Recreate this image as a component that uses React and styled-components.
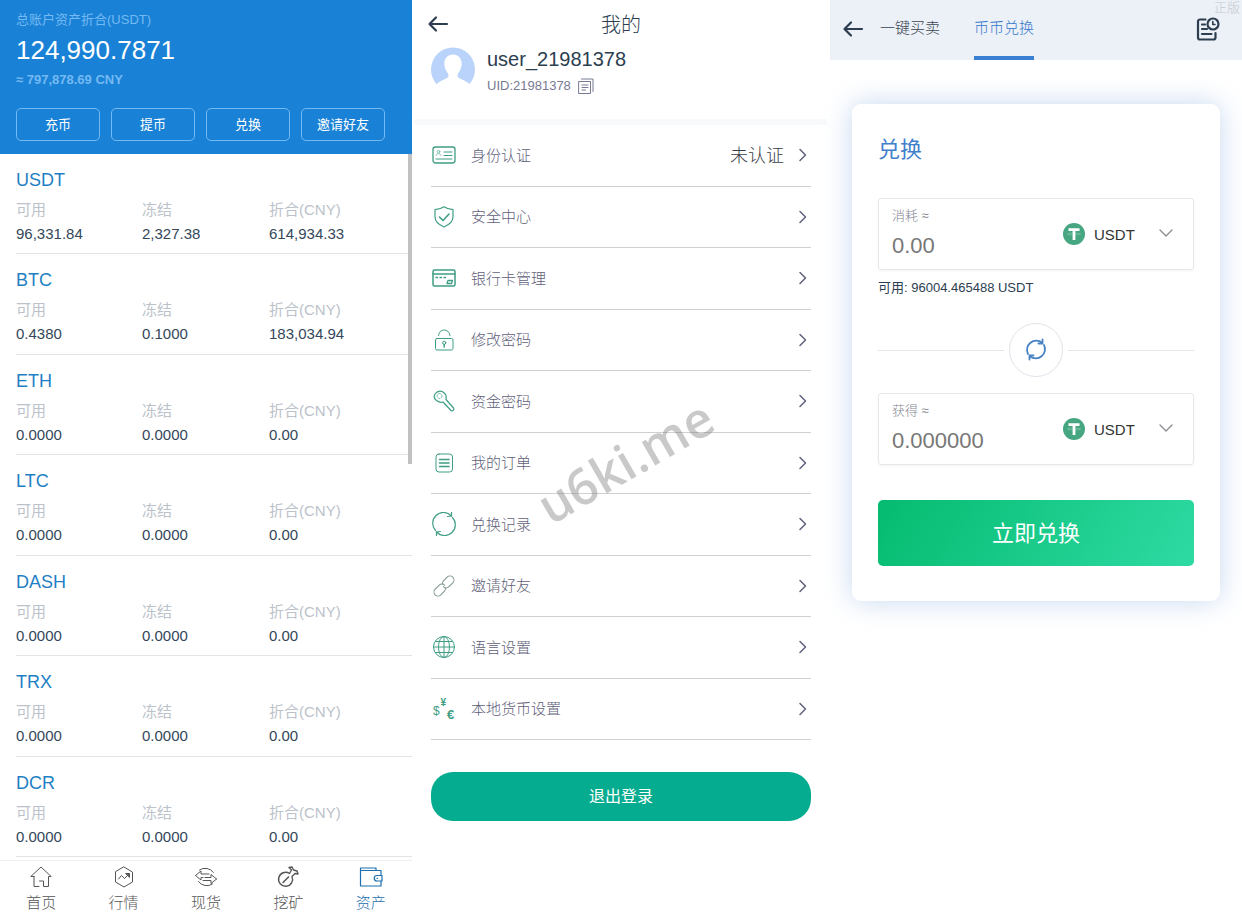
import React, { useState } from 'react';
import styled, { createGlobalStyle } from 'styled-components';

const GlobalStyle = createGlobalStyle`
  * {
    box-sizing: border-box;
  }

  body {
    margin: 0;
    background: #fff;
    color: #2c3e50;
    font-family: "Liberation Sans", Arial, "Noto Sans CJK SC", sans-serif;
    font-size: 15px;
    font-weight: 300;
  }

  button, input, select {
    font-family: inherit;
    font-weight: inherit;
    margin: 0;
    padding: 0;
    border: 0;
    background: none;
  }

  button {
    cursor: pointer;
  }

  a {
    color: inherit;
    text-decoration: none;
  }

  svg {
    display: block;
    flex-shrink: 0;
  }
`;

const Page = styled.main`
  display: grid;
  grid-template-columns: 412fr 418fr 412fr;
  min-height: 100vh;
`;

const Icon = styled.svg.attrs({ 'aria-hidden': true })`
  width: ${(p) => p.$size || 24}px;
  height: ${(p) => p.$size || 24}px;
  fill: none;
  stroke: currentColor;
  stroke-width: ${(p) => p.$stroke || 1};
  stroke-linecap: round;
  stroke-linejoin: round;
`;

const IconButton = styled.button`
  display: flex;
  color: ${(p) => p.$color || '#2c3e50'};
`;

/* ---------- assets ---------- */

const Wallet = styled.section`
  display: flex;
  flex-direction: column;
  min-width: 0;
`;

const WalletHeader = styled.header`
  padding: 10px 27px 13px 16px;
  background: #1a82d6;
`;

const WalletNote = styled.p`
  margin: 0;
  color: #74b9f2;
  font-size: 13px;
  font-weight: ${(p) => (p.$bold ? 700 : 400)};
  line-height: 20px;
`;

const WalletTotal = styled.p`
  margin: 0;
  color: #fff;
  font-size: 26px;
  line-height: 40px;
`;

const WalletActions = styled.div`
  display: grid;
  grid-template-columns: repeat(4, 1fr);
  gap: 11px;
  margin-top: 18px;
`;

const WalletAction = styled.button`
  height: 33px;
  padding-bottom: 2px;
  border: 1px solid #74b9f2;
  border-radius: 5px;
  color: #fff;
  font-size: 13px;
  font-weight: 400;
`;

const CoinList = styled.div`
  position: relative;
  flex: 1;
  display: grid;
  grid-auto-rows: 1fr;
  padding: 0 0 3px 16px;
`;

const ScrollThumb = styled.div`
  position: absolute;
  top: 0;
  right: 0;
  width: 4px;
  height: 310px;
  background: #c1c1c1;
`;

const Coin = styled.article`
  padding: 14px 0 7px;
  border-bottom: 1px solid #e2e4e8;
`;

const CoinName = styled.h2`
  margin: 0 0 6px;
  color: #1f7fc4;
  font-size: 18px;
  font-weight: 400;
  line-height: 24px;
`;

const CoinStats = styled.dl`
  display: grid;
  grid-template-columns: 126fr 127fr 143fr;
  margin: 0;
`;

const CoinLabel = styled.dt`
  color: #bcc2ca;
  font-weight: 400;
  line-height: 24px;
`;

const CoinValue = styled.dd`
  margin: 0;
  color: #34475a;
  line-height: 24px;
`;

const TabBar = styled.nav`
  display: grid;
  grid-template-columns: repeat(5, 1fr);
  height: 55px;
  border-top: 1px solid #f0f0f2;
`;

const TabItem = styled.a`
  display: flex;
  flex-direction: column;
  align-items: center;
  padding-top: 4px;
  color: ${(p) => (p.$active ? '#1b6fae' : '#555')};
  line-height: 28px;
`;

/* ---------- profile ---------- */

const Profile = styled.section`
  position: relative;
  min-width: 0;
`;

const ProfileHeader = styled.header`
  display: grid;
  grid-template-columns: 22px 1fr 22px;
  align-items: center;
  height: 47px;
  padding: 0 15px;
`;

const ProfileTitle = styled.h1`
  margin: 0;
  font-size: 20px;
  font-weight: 300;
  text-align: center;
`;

const UserCard = styled.div`
  display: flex;
  gap: 12px;
  height: 72px;
  padding: 0 19px;
`;

const UserName = styled.p`
  margin: 0;
  font-size: 20px;
  line-height: 24px;
`;

const UserId = styled.p`
  display: flex;
  align-items: center;
  gap: 7px;
  margin: 3px 0 0;
  color: #777a92;
  font-size: 13px;
  line-height: 24px;
`;

const Divider = styled.div`
  height: 6px;
  margin: 0 3px 0 2px;
  background: #f8f9fb;
`;

const Menu = styled.nav`
  display: grid;
  grid-auto-rows: 1fr;
  min-height: 615px;
  margin: 0 19px;
`;

const MenuItem = styled.a`
  display: flex;
  align-items: center;
  gap: 15px;
  padding-right: 1px;
  border-bottom: 1px solid #cfd0d4;
  color: #5f617a;
`;

const MenuIcon = styled.span`
  display: flex;
  justify-content: center;
  width: 25px;
  color: #3f9d84;
`;

const MenuLabel = styled.span`
  flex: 1;
  padding-bottom: 2px;
`;

const MenuStatus = styled.span`
  margin-right: -3px;
  padding-bottom: 2px;
  color: #3a3b44;
  font-size: 18px;
`;

const LogoutButton = styled.button`
  display: block;
  width: calc(100% - 38px);
  height: 49px;
  margin: 32px 19px 0;
  padding-bottom: 3px;
  border-radius: 22px;
  background: #06ac90;
  color: #fff;
  font-size: 16px;
  font-weight: 400;
`;

const Watermark = styled.span`
  position: absolute;
  top: 426px;
  left: 51%;
  color: rgba(120, 120, 120, 0.4);
  font-family: "Open Sans", sans-serif;
  font-size: 50px;
  font-weight: 600;
  line-height: 70px;
  transform: translateX(-50%) rotate(-30deg);
  pointer-events: none;
`;

/* ---------- exchange ---------- */

const Exchange = styled.section`
  position: relative;
  min-width: 0;
`;

const ExchangeHeader = styled.header`
  display: flex;
  align-items: center;
  height: 60px;
  padding: 0 22px 2px 12px;
  background: #ecf0f7;
`;

const ExchangeTabs = styled.nav`
  display: flex;
  flex: 1;
  gap: 34px;
  margin-left: 16px;
`;

const ExchangeTab = styled.a`
  height: 60px;
  margin-bottom: -2px;
  border-bottom: 4px solid ${(p) => (p.$active ? '#3a80d2' : 'transparent')};
  color: ${(p) => (p.$active ? '#3478cc' : '#3a4653')};
  line-height: 56px;
`;

const Badge = styled.span`
  position: absolute;
  top: -3px;
  right: 2px;
  color: #c4c8ce;
  font-size: 13px;
`;

const Card = styled.form`
  margin: 44px 22px 0;
  padding: 26px 26px 35px;
  border-radius: 9px;
  background: #fff;
  box-shadow: 0 0 28px rgba(80, 135, 210, 0.32);
`;

const CardTitle = styled.h2`
  margin: 0 0 28px;
  color: #3f7fcb;
  font-size: 22px;
  font-weight: 400;
  line-height: 40px;
`;

const Field = styled.div`
  display: flex;
  align-items: center;
  height: 72px;
  padding: 0 20px 0 13px;
  border: 1px solid #e5e7ea;
  border-radius: 3px;
  box-shadow: 0 1px 3px rgba(0, 0, 0, 0.05);
`;

const Amount = styled.div`
  flex: 1;
  min-width: 0;
  padding-bottom: 2px;
`;

const AmountLabel = styled.label`
  display: block;
  color: #858694;
  font-size: 13px;
  line-height: 26px;
`;

const AmountInput = styled.input`
  display: block;
  width: 100%;
  height: 34px;
  font-size: 22px;
  outline: none;

  &::placeholder {
    color: #777;
    opacity: 1;
  }
`;

const Picker = styled.div`
  display: flex;
  align-items: center;
  gap: 9px;
  width: 110px;
  color: #8b8d92;
`;

const CoinSelect = styled.select`
  flex: 1;
  min-width: 0;
  appearance: none;
  color: #333;
  font-size: 15px;
  outline: none;
`;

const Available = styled.p`
  margin: 6px 0 23px;
  color: #2c3e50;
  font-size: 13px;
  font-weight: 400;
  line-height: 24px;
`;

const SwapRow = styled.div`
  display: flex;
  align-items: center;
  gap: 5px;
  margin-bottom: 16px;

  &::before,
  &::after {
    content: '';
    flex: 1;
    height: 1px;
    background: #e4e6ea;
  }
`;

const SwapButton = styled.button`
  display: flex;
  align-items: center;
  justify-content: center;
  width: 54px;
  height: 54px;
  border: 1px solid #e1e3ea;
  border-radius: 50%;
  color: #4581c4;
`;

const SubmitButton = styled.button`
  width: 100%;
  height: 66px;
  margin-top: 35px;
  padding-bottom: 4px;
  border-radius: 5px;
  background: linear-gradient(120deg, #05bb70, #2edaa3);
  color: #fff;
  font-size: 22px;
  font-weight: 400;
`;

const coins = [
  { name: 'USDT', free: '96,331.84', frozen: '2,327.38', cny: '614,934.33' },
  { name: 'BTC', free: '0.4380', frozen: '0.1000', cny: '183,034.94' },
  { name: 'ETH', free: '0.0000', frozen: '0.0000', cny: '0.00' },
  { name: 'LTC', free: '0.0000', frozen: '0.0000', cny: '0.00' },
  { name: 'DASH', free: '0.0000', frozen: '0.0000', cny: '0.00' },
  { name: 'TRX', free: '0.0000', frozen: '0.0000', cny: '0.00' },
  { name: 'DCR', free: '0.0000', frozen: '0.0000', cny: '0.00' },
];

const tabs = [
  {
    label: '首页',
    icon: <path d="M5 11.5H1.8L12 2l10.2 9.5H19.5V21.500h-5v-5.500h-4M5 11.500V21.500h5" />,
  },
  {
    label: '行情',
    icon: (
      <>
        <path d="M12 2l8.500 5v10L12 22l-8.500-5V7z" />
        <path d="M6.500 14l3-3.500 3 3L17 9" />
        <path d="M14 8.500h3.500v3.500z" fill="currentColor" />
      </>
    ),
  },
  {
    label: '现货',
    icon: (
      <>
        <path d="M5.500 5a10 10 0 0 1 14 2.500M18.500 19a10 10 0 0 1-14-2.500" />
        <path d="M1.500 10.500L7 6v3h8M1.500 10.500L7 15v-2.500h2M22.500 14L17 9.500v3H11M22.500 14L17 18.500v-3H9" />
      </>
    ),
  },
  {
    label: '挖矿',
    icon: (
      <>
        <path d="M13.500 8.500A7 7 0 1 0 16 11.500L19 8.500l3 .5-1-3-3.500-1-1.500-3-3 .5 2.500 2.500z" strokeWidth="1.400" />
        <path d="M7 17.500l5.500-5.500" strokeWidth="1.600" />
      </>
    ),
  },
  {
    label: '资产',
    active: true,
    icon: (
      <path
        d="M1.500 5.500V3h15.500v2.500M1.500 5.500h20.500v5M1.500 5.500V21H22v-5M23 10.500h-5a2.750 2.750 0 0 0 0 5.500h5zM18 13.300h.5"
        strokeWidth="1.200"
      />
    ),
  },
];

const menu = [
  {
    label: '身份认证',
    status: '未认证',
    icon: (
      <>
        <rect x="1" y="4" width="22" height="16" rx="2.500" strokeWidth="1.300" />
        <circle cx="6.500" cy="8.700" r="1.400" strokeWidth=".6" />
        <path d="M4 12.500c.3-2.500 4.700-2.500 5 0" strokeWidth=".6" />
        <path d="M12 9h8M12 12.500h8M4 16h16" />
      </>
    ),
  },
  {
    label: '安全中心',
    icon: (
      <>
        <path d="M12 1.800c3 2 6 2.800 9 2.800v7c0 5-4 8.400-9 10.400-5-2-9-5.400-9-10.400v-7c3 0 6-.8 9-2.800z" strokeWidth="1.200" />
        <path d="M7.500 12l3.500 3.500 6-6.500" strokeWidth="1.600" />
      </>
    ),
  },
  {
    label: '银行卡管理',
    icon: (
      <>
        <rect x="1" y="4" width="22" height="16" rx="1.500" strokeWidth="1.500" />
        <path d="M1 8h22" strokeWidth="1.500" />
        <path d="M4 11.500h1.500M8 11.500h1.500M12 11.500h1.500M16 14.500h4.500l-1 3H15z" strokeWidth="1.300" />
      </>
    ),
  },
  {
    label: '修改密码',
    icon: (
      <>
        <rect x="3.500" y="10.500" width="17.500" height="11.500" rx="1.500" />
        <path d="M6.500 7.500C7 0 17.500 0 18 7.500" />
        <circle cx="12.200" cy="14.800" r="1.600" />
        <path d="M12.200 16.500v2.500" strokeWidth="1.500" />
      </>
    ),
  },
  {
    label: '资金密码',
    icon: (
      <>
        <path d="M11 13l8 8.500c1.500 1.200 3.700-.8 2.500-2.500L14 10.500c.8-3.500-.5-6-3-7.500-3-1.500-6-.5-8 2-1.500 2.500-.5 5 1.500 6.500 2 1.500 4.500 2.300 6.500 1.500z" strokeWidth="1.200" />
        <circle cx="7.500" cy="7" r="2.500" strokeDasharray="2 1.500" strokeWidth=".7" />
      </>
    ),
  },
  {
    label: '我的订单',
    icon: (
      <>
        <rect x="4" y="3" width="16.500" height="18" rx="3" />
        <path d="M7.500 8.500h9.500M7.500 12h9.500M7.500 15.500h9.500" strokeWidth="1.600" />
      </>
    ),
  },
  {
    label: '兑换记录',
    icon: (
      <>
        <path d="M3.500 18.500A10.700 10.700 0 0 1 19.500 4M20.500 5.500A10.700 10.700 0 0 1 4.500 20" strokeWidth="1.200" />
        <path d="M15.500 4.500l4-.5v-3.500M8.500 19.500l-4 .5v3.500" strokeWidth="1.200" />
      </>
    ),
  },
  {
    label: '邀请好友',
    icon: (
      <g transform="rotate(-45 12 12)" stroke="#7f958e">
        <path d="M11.500 14.500a4 4 0 0 1-2.500 1.500H3.500a4 4 0 0 1 0-8H9a4 4 0 0 1 4 4" />
        <path d="M12.500 9.500a4 4 0 0 1 2.500-1.500h5.500a4 4 0 0 1 0 8H15a4 4 0 0 1-4-4" />
      </g>
    ),
  },
  {
    label: '语言设置',
    icon: (
      <>
        <circle cx="12" cy="12" r="10.500" />
        <ellipse cx="12" cy="12" rx="5.500" ry="10.500" />
        <path d="M12 1.500v21M1.500 12h21M3.500 6.500h17M3.500 17.500h17" />
      </>
    ),
  },
  {
    label: '本地货币设置',
    icon: (
      <g fill="currentColor" stroke="none" fontFamily="Liberation Sans, sans-serif">
        <text x="1" y="18" fontSize="12">$</text>
        <text x="8.500" y="9" fontSize="10" fontWeight="700">¥</text>
        <text x="15" y="22" fontSize="13" fontWeight="700">€</text>
      </g>
    ),
  },
];

const BackArrow = () => (
  <Icon $size={22} $stroke={2.2} viewBox="0 0 22 22">
    <path d="M20 11H3M9 4.500L2.500 11 9 17.500" />
  </Icon>
);

const Chevron = () => (
  <Icon $size={14} $stroke={1.5} viewBox="0 0 14 14">
    <path d="M4 1.500l5.500 5.500L4 12.500" />
  </Icon>
);

const TetherLogo = () => (
  <Icon $size={22} viewBox="0 0 22 22">
    <circle cx="11" cy="11" r="11" fill="#45a681" stroke="none" />
    <ellipse cx="11" cy="11" rx="6.500" ry="1" stroke="#8dcab1" strokeWidth=".6" />
    <path d="M5.500 6.700h11M11 6.700v10.300" stroke="#fff" strokeWidth="2.800" strokeLinecap="butt" />
  </Icon>
);

const AmountField = ({ id, label, placeholder }) => {
  const [value, setValue] = useState('');

  return (
    <Field>
      <Amount>
        <AmountLabel htmlFor={id}>{label}</AmountLabel>
        <AmountInput
          id={id}
          type="text"
          inputMode="decimal"
          placeholder={placeholder}
          value={value}
          onChange={(e) => setValue(e.target.value)}
        />
      </Amount>
      <Picker>
        <TetherLogo />
        <CoinSelect aria-label={`${label} 币种`} defaultValue="USDT">
          {coins.map((coin) => (
            <option key={coin.name}>{coin.name}</option>
          ))}
        </CoinSelect>
        <Icon $size={14} $stroke={1.4} viewBox="0 0 14 14">
          <path d="M1 3l6 6 6-6" />
        </Icon>
      </Picker>
    </Field>
  );
};

const WalletPanel = () => (
  <Wallet>
    <WalletHeader>
      <WalletNote>总账户资产折合(USDT)</WalletNote>
      <WalletTotal>124,990.7871</WalletTotal>
      <WalletNote $bold>≈ 797,878.69 CNY</WalletNote>
      <WalletActions>
        {['充币', '提币', '兑换', '邀请好友'].map((action) => (
          <WalletAction key={action} type="button">{action}</WalletAction>
        ))}
      </WalletActions>
    </WalletHeader>

    <CoinList>
      {coins.map((coin) => (
        <Coin key={coin.name}>
          <CoinName>{coin.name}</CoinName>
          <CoinStats>
            <div>
              <CoinLabel>可用</CoinLabel>
              <CoinValue>{coin.free}</CoinValue>
            </div>
            <div>
              <CoinLabel>冻结</CoinLabel>
              <CoinValue>{coin.frozen}</CoinValue>
            </div>
            <div>
              <CoinLabel>折合(CNY)</CoinLabel>
              <CoinValue>{coin.cny}</CoinValue>
            </div>
          </CoinStats>
        </Coin>
      ))}
      <ScrollThumb />
    </CoinList>

    <TabBar>
      {tabs.map((tab) => (
        <TabItem key={tab.label} href="#" $active={tab.active}>
          <Icon viewBox="0 0 24 24">{tab.icon}</Icon>
          {tab.label}
        </TabItem>
      ))}
    </TabBar>
  </Wallet>
);

const ProfilePanel = () => (
  <Profile>
    <ProfileHeader>
      <IconButton type="button" aria-label="返回">
        <BackArrow />
      </IconButton>
      <ProfileTitle>我的</ProfileTitle>
    </ProfileHeader>

    <UserCard>
      <Icon $size={44} viewBox="0 0 44 44">
        <path
          d="M5.500 37A22 22 0 1 1 38.500 37C35 34 31 32.500 28 31C25.500 29.500 26.500 27 28 25C33 18 31 7.500 22 7.500S11 18 16 25C17.500 27 18.500 29.500 16 31C13 32.500 9 34 5.500 37z"
          fill="#bad3fa"
          stroke="none"
        />
      </Icon>
      <div>
        <UserName>user_21981378</UserName>
        <UserId>
          UID:21981378
          <IconButton type="button" aria-label="复制" $color="#777a92">
            <Icon $size={16} viewBox="0 0 16 16">
              <path d="M1 3.500h11.500v12H1zM3.500 1H15v12.500M4 7h6M4 9.500h6M4 12h3.500" />
            </Icon>
          </IconButton>
        </UserId>
      </div>
    </UserCard>

    <Divider />

    <Menu>
      {menu.map((item) => (
        <MenuItem key={item.label} href="#">
          <MenuIcon>
            <Icon viewBox="0 0 24 24">{item.icon}</Icon>
          </MenuIcon>
          <MenuLabel>{item.label}</MenuLabel>
          {item.status && <MenuStatus>{item.status}</MenuStatus>}
          <Chevron />
        </MenuItem>
      ))}
    </Menu>

    <LogoutButton type="button">退出登录</LogoutButton>
    <Watermark>u6ki.me</Watermark>
  </Profile>
);

const ExchangePanel = () => (
  <Exchange>
    <ExchangeHeader>
      <IconButton type="button" aria-label="返回">
        <BackArrow />
      </IconButton>
      <ExchangeTabs>
        <ExchangeTab href="#">一键买卖</ExchangeTab>
        <ExchangeTab href="#" $active>币币兑换</ExchangeTab>
      </ExchangeTabs>
      <IconButton type="button" aria-label="记录">
        <Icon $stroke={2.2} viewBox="0 0 24 24">
          <path d="M9.500 2.500H4a2 2 0 0 0-2 2v16a2 2 0 0 0 2 2h13.500a2 2 0 0 0 2-2V16M6 7.500h3M6 12h5M6 17h9.500" />
          <circle cx="17" cy="7" r="5.500" />
          <path d="M16.800 4.500V7.500H19" strokeWidth="1.600" />
        </Icon>
      </IconButton>
    </ExchangeHeader>
    <Badge>正版</Badge>

    <Card onSubmit={(e) => e.preventDefault()}>
      <CardTitle>兑换</CardTitle>
      <AmountField id="spend" label="消耗 ≈" placeholder="0.00" />
      <Available>可用: 96004.465488 USDT</Available>
      <SwapRow>
        <SwapButton type="button" aria-label="互换">
          <Icon $stroke={1.8} viewBox="0 0 24 24">
            <path d="M4 16A9.300 9.300 0 0 1 18 4.500M20 7A9.300 9.300 0 0 1 6 18.500" />
            <path d="M14.500 5.500h4v-4M9.500 17.500h-4v4" />
          </Icon>
        </SwapButton>
      </SwapRow>
      <AmountField id="receive" label="获得 ≈" placeholder="0.000000" />
      <SubmitButton type="submit">立即兑换</SubmitButton>
    </Card>
  </Exchange>
);

const App = () => (
  <>
    <GlobalStyle />
    <Page>
      <WalletPanel />
      <ProfilePanel />
      <ExchangePanel />
    </Page>
  </>
);

export default App;
